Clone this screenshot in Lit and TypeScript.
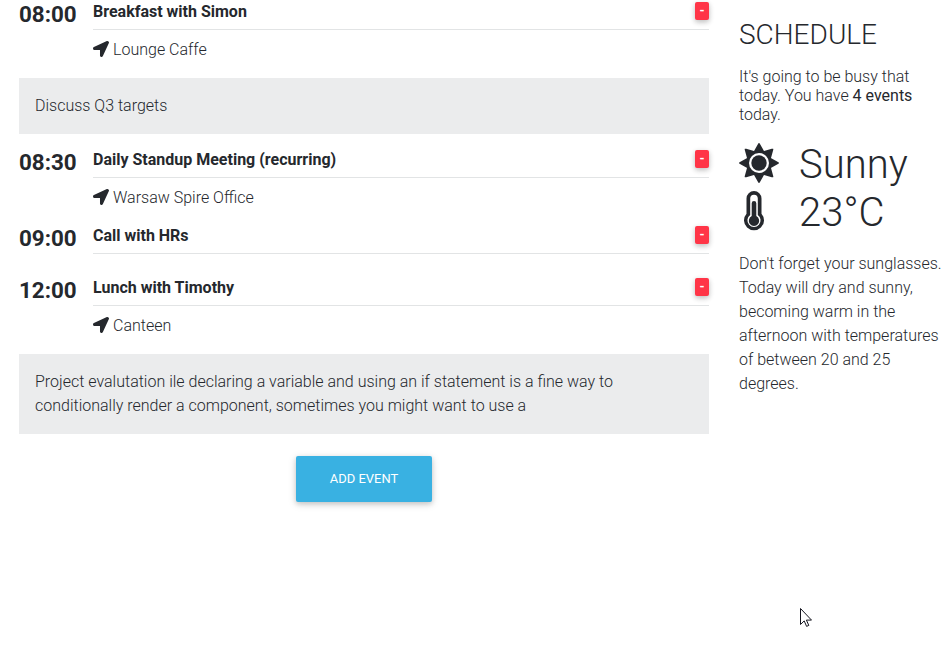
import { LitElement, html, css, svg, nothing } from "lit";
import { customElement, property } from "lit/decorators.js";

interface ScheduleEvent {
  time: string;
  title: string;
  place?: string;
  note?: string;
}

const EVENTS: ScheduleEvent[] = [
  { time: "08:00", title: "Breakfast with Simon", place: "Lounge Caffe", note: "Discuss Q3 targets" },
  { time: "08:30", title: "Daily Standup Meeting (recurring)", place: "Warsaw Spire Office" },
  { time: "09:00", title: "Call with HRs" },
  {
    time: "12:00",
    title: "Lunch with Timothy",
    place: "Canteen",
    note: "Project evalutation ile declaring a variable and using an if statement is a fine way to conditionally render a component, sometimes you might want to use a",
  },
];

const RAYS = [0, 45, 90, 135, 180, 225, 270, 315];

@customElement("schedule-event")
class ScheduleEventElement extends LitElement {
  @property({ attribute: false }) event!: ScheduleEvent;

  static styles = css`
    :host { display: block; }
    .row { display: grid; grid-template-columns: 74px 1fr; min-height: 52px; }
    .row.placed { min-height: 76px; }
    .row.noted { min-height: 78px; }
    .time { font-size: 22.4px; font-weight: 700; line-height: 28px; }
    .head {
      display: flex; justify-content: space-between; align-items: flex-start;
      height: 29px; border-bottom: 1px solid #e2e4e5;
    }
    .title { font-weight: 700; line-height: 24px; }
    .remove {
      width: 14px; height: 18px; margin-top: 2px; padding: 0; border: 0; border-radius: 2px;
      background: #ff3547; color: #fff; font: 700 12.8px/18px Roboto, sans-serif; text-align: center;
      box-shadow: 0 2px 5px rgba(0, 0, 0, 0.16), 0 2px 6px rgba(0, 0, 0, 0.12);
    }
    .place { display: flex; align-items: center; gap: 4px; margin-top: 8px; line-height: 24px; }
    .arrow { width: 16px; height: 16px; margin-bottom: 2px; fill: #25282d; }
    .note { background: #ebeced; padding: 16px; margin-bottom: 14px; line-height: 24px; }
  `;

  render() {
    const e = this.event;
    return html`
      <div class="row ${e.place ? "placed" : ""} ${e.note ? "noted" : ""}">
        <div class="time">${e.time}</div>
        <div>
          <div class="head">
            <span class="title">${e.title}</span>
            <button class="remove">-</button>
          </div>
          ${e.place
            ? html`<div class="place">
                <svg class="arrow" viewBox="0 0 512 512">
                  <path d="M444.52 3.52L28.74 195.42c-47.97 22.39-31.98 92.75 19.19 92.75h175.91v175.91c0 51.17 70.36 67.17 92.75 19.19l191.9-415.78c15.99-38.38-25.59-79.97-63.97-63.97z" />
                </svg>
                <span>${e.place}</span>
              </div>`
            : nothing}
        </div>
      </div>
      ${e.note ? html`<div class="note">${e.note}</div>` : nothing}
    `;
  }
}

@customElement("app-root")
class AppRoot extends LitElement {
  static styles = css`
    :host {
      display: block; position: relative; height: 666px; overflow: hidden; background: #fff;
      color: #25282d; font: 300 16px/24px Roboto, sans-serif;
    }
    .page { display: grid; grid-template-columns: 690px 203px; column-gap: 30px; padding-left: 19px; }
    .actions { display: flex; justify-content: center; margin-top: 22px; }
    .add {
      width: 136px; height: 46px; padding: 0; border: 0; border-radius: 2px; background: #39b1e2;
      color: #fff; font: 400 12.96px/46px Roboto, sans-serif;
      box-shadow: 0 2px 5px rgba(0, 0, 0, 0.16), 0 2px 10px rgba(0, 0, 0, 0.12);
    }
    .heading { margin: 17px 0 0; font-size: 28px; font-weight: 300; line-height: 35px; }
    .summary { margin: 15px 0 0; line-height: 19px; }
    .count { font-weight: 400; }
    .weather {
      display: grid; grid-template-columns: 40px 1fr; column-gap: 20px; align-items: center;
      margin-top: 15px; grid-auto-rows: 48px; font-size: 40px; line-height: 48px;
    }
    .glyph { width: 40px; height: 40px; display: block; }
    .ink { fill: #25282d; }
    .gap { fill: #fff; }
    .thin { font-weight: 300; padding-top: 4px; }
    .advice { margin: 17px 0 0; }
    .pointer { position: absolute; left: 800px; top: 608px; width: 12px; height: 19px; }
  `;

  render() {
    return html`
      <div class="page">
        <main>
          ${EVENTS.map((e) => html`<schedule-event .event=${e}></schedule-event>`)}
          <div class="actions"><button class="add">ADD EVENT</button></div>
        </main>
        <aside>
          <h2 class="heading">SCHEDULE</h2>
          <p class="summary">It's going to be busy that today. You have <span class="count">4 events</span> today.</p>
          <div class="weather">
            <svg class="glyph" viewBox="0 0 40 40">
              ${RAYS.map((a) => svg`<path class="ink" transform="rotate(${a} 20 20)" d="M20 0Q20.6 0 21 1L25.8 9.5H14.2L19 1Q19.4 0 20 0Z" />`)}
              <circle class="ink" cx="20" cy="20" r="12.6" />
              <circle class="gap" cx="20" cy="20" r="10" />
              <circle class="ink" cx="20" cy="20" r="7.7" />
            </svg>
            <span class="thin">Sunny</span>
            <svg class="glyph" viewBox="0 0 40 40">
              <path class="ink" d="M7.5 7.5a7.5 7.5 0 0 1 15 0v15.2a10 10 0 1 1-15 0z" />
              <path class="gap" d="M11.2 7.5a3.8 3.8 0 0 1 7.6 0v16.4a6.6 6.6 0 1 1-7.6 0z" />
              <path class="ink" d="M12.7 12.2a2.3 2.3 0 0 1 4.6 0v12.9a5.2 5.2 0 1 1-4.6 0z" />
            </svg>
            <span class="thin">23°C</span>
          </div>
          <p class="advice">Don't forget your sunglasses. Today will dry and sunny, becoming warm in the afternoon with temperatures of between 20 and 25 degrees.</p>
        </aside>
      </div>
      <svg class="pointer" viewBox="0 0 12 19">
        <path d="M.5.5v16l3.7-3.6 2.4 5.5 2.2-1-2.4-5.3h5.1z" fill="#fff" stroke="#15151f" stroke-width="1" />
      </svg>
    `;
  }
}
